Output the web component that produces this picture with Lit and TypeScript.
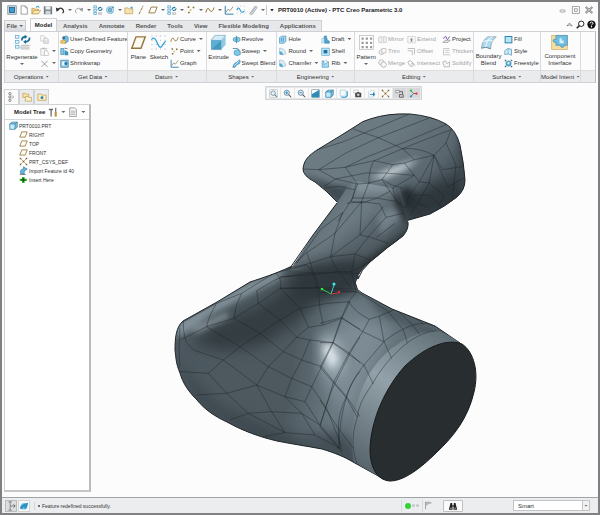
import { LitElement, html, svg, css, nothing, TemplateResult } from "lit";
import { customElement, property } from "lit/decorators.js";

const shapes: Record<string, TemplateResult> = {
  app: svg`<rect x="1" y="1" width="10" height="10" fill="#e6eef3" stroke="#6e7f8a"/><rect x="3" y="3" width="6" height="6" fill="#3d9bd0" stroke="#1f5f88"/>`,
  doc: svg`<path d="M2.500 1h5l2.500 2.500v7.500h-7.500z" fill="#fff" stroke="#777" stroke-width=".8"/><path d="M7.500 1v2.500h2.500" fill="none" stroke="#777" stroke-width=".7"/>`,
  open: svg`<path d="M1 10.500v-6.500h3l1 1h4v5.500z" fill="#f0d08a" stroke="#b48a3a" stroke-width=".7"/><path d="M1 10.500l2.500-4h8l-2.500 4z" fill="#fbe7b5" stroke="#b48a3a" stroke-width=".7"/><path d="M6 3q2-2.500 4 0" fill="none" stroke="#3b92c4" stroke-width="1.300"/>`,
  save: svg`<path d="M1 1.500h9l1 1v8.500h-10z" fill="#777f86"/><rect x="3" y="1.500" width="6" height="4" fill="#eceef0"/><rect x="3" y="7" width="6" height="4" fill="#cfd4d8"/>`,
  undo: svg`<path d="M3 5.500q4-3.500 7 .500q1 2.500-1 4" fill="none" stroke="#333" stroke-width="1.500"/><path d="M1 3l.800 5 4-2.500z" fill="#333"/>`,
  redo: svg`<path d="M9 5.500q-4-3.500-7 .500q-1 2.500 1 4" fill="none" stroke="#999" stroke-width="1"/><path d="M11 3l-.800 5-4-2.500z" fill="#999"/>`,
  regen: svg`<g fill="#e9f5fb" stroke="#4ba0c8" stroke-width=".8"><rect x="1" y="1" width="3" height="2.500"/><rect x="1" y="5" width="3" height="2.500"/><rect x="1" y="9" width="3" height="2.500"/></g><path d="M6 5.500q.500-3 4-2.500M11 4q-.500 3-4 2.500" fill="none" stroke="#1b79a8" stroke-width="1.400"/><path d="M6 9.500h5M6 11h5" stroke="#999" stroke-width=".8"/>`,
  cubes: svg`<circle cx="6" cy="6" r="4" fill="none" stroke="#70b8d8" stroke-width="1.300"/><path d="M4 4.500l2-1 2 1v3l-2 1-2-1z" fill="#77bfdf" stroke="#256d93" stroke-width=".7"/><path d="M9 1l2 2-2 1z" fill="#2b89b5"/>`,
  folder: svg`<path d="M1 10.500v-7h4l1 1.200h4.500v5.800z" fill="#f7e2ae" stroke="#bd9a4c" stroke-width=".8"/><path d="M7 3.500l3-2 .500 3z" fill="#3e9acb"/>`,
  line: svg`<path d="M3.500 11l5-10" stroke="#8b6a2c" stroke-width="1.100" stroke-dasharray="4 1"/>`,
  plane: svg`<path d="M1 9.500l2.800-7h7.200l-2.800 7z" fill="#fffdf7" stroke="#94763c" stroke-width="1.100"/>`,
  curve: svg`<path d="M1 9q2-8 4.500-3t5.500-3" fill="none" stroke="#94763c" stroke-width="1.200"/>`,
  point: svg`<path d="M2 1.500h2v2h-2zM8 2h2v2h-2zM2.500 8h2v2h-2z" fill="#8b6a2c"/><path d="M4.500 5h2v2h-2z" fill="#dcb35c"/>`,
  graph: svg`<path d="M1.500 1v10h10" fill="none" stroke="#2d83b4" stroke-width="1.200"/><path d="M2 9l3-4 2 2 4-5" fill="none" stroke="#8f8464"/>`,
  sketch: svg`<g fill="#b9c2c8"><path d="M1 1h1v1h-1zM5 1h1v1h-1zM9.500 1h1v1h-1zM1 10h1v1h-1zM5 10h1v1h-1zM10 10h1v1h-1zM1 5.500h1v1h-1zM10 5.500h1v1h-1z"/></g><path d="M1 6q2-5 4 0t5 1" fill="none" stroke="#2d9bd0" stroke-width="1.300"/>`,
  clip: svg`<path d="M2 10.500l6-8.500q2-1 3 .800l-5.500 8q-2 1.500-3.500-.300z" fill="#dfe4e8" stroke="#8b969e" stroke-width=".8"/><path d="M4 9.500l5-7" stroke="#8b969e" stroke-width=".7"/>`,
  copy: svg`<path d="M1 1h4l2 2v5h-6z" fill="#fff" stroke="#b5b5b5" stroke-width=".8"/><path d="M5 4h4l2 2v5h-6z" fill="#f0f0f0" stroke="#aaa" stroke-width=".8"/><path d="M6 8h4M6 9.500h4" stroke="#c5c5c5" stroke-width=".6"/>`,
  paste: svg`<path d="M1 2h8v9h-8z" fill="#f4f4f4" stroke="#b5b5b5" stroke-width=".8"/><path d="M3 1h4v2h-4z" fill="#bbb"/><path d="M6 5h3l2 2v4.500h-5z" fill="#fff" stroke="#aaa" stroke-width=".8"/>`,
  cross: svg`<path d="M2 2.500l8 8M10 2.500l-8 8" stroke="#888" stroke-width="1.100"/>`,
  udf: svg`<path d="M4 3l4-2 3 1.500v6l-4 2.500-3-2z" fill="#77bde0" stroke="#3786ae" stroke-width=".7"/><path d="M1 7.500l4-1 2.500 1.500v3h-6.500z" fill="#f2c867" stroke="#b28a36" stroke-width=".7"/><circle cx="5" cy="3.500" r="2" fill="#3e6f9c"/>`,
  copygeo: svg`<path d="M1 2h4v8h-4z" fill="#8bcbe8" stroke="#2c7da6" stroke-width=".8"/><path d="M6 4l5 2.500v4.500h-5z" fill="#3a95c2"/><path d="M6 1.500l4 1" stroke="#555" stroke-width="1"/>`,
  shrink: svg`<rect x="1" y="1.500" width="10" height="9.500" fill="#8dc7e2" stroke="#37789b" stroke-width=".8"/><path d="M3 3.500h3v5h-3z" fill="#f3fafe"/><circle cx="8" cy="6" r="2" fill="#1f76a3"/>`,
  revolve: svg`<path d="M1 6h10" stroke="#888" stroke-width=".7"/><path d="M2 4l3-1v6l-3-1zM7 3l3.500 1v4l-3.500 1z" fill="#9bd4ec" stroke="#338db6" stroke-width=".8"/><path d="M6 1v10" stroke="#2a7ca4"/>`,
  sweep: svg`<path d="M1 2h6q3 1 3 4" fill="none" stroke="#37789b"/><path d="M3 5.500l4-2 4 2v4.500l-4 1.500-4-1.500z" fill="#7fc8e8" stroke="#2c85b0" stroke-width=".8"/>`,
  blend: svg`<path d="M1 11q1-6 6-7l3-3q2 2 0 5l-4 2-2 3z" fill="#6fbbe0" stroke="#2f7fa9" stroke-width=".8"/><path d="M3 9l6-6" stroke="#d9f2fc"/>`,
  hole: svg`<path d="M2 3.500l3-2h5.500v7l-2.500 2.500h-6z" fill="#a9daf0" stroke="#318ab6" stroke-width=".8"/><path d="M4.500 4v5M7 3v6" stroke="#318ab6"/>`,
  round: svg`<path d="M2 1.500q7-.500 8.500 7.500l-4 1.500q0-5-4.500-5.500z" fill="#d8eff9" stroke="#9aa7af" stroke-width=".7"/><path d="M1.500 5.500q5 .500 5 5.500l-4.500-1z" fill="#4fa7d2"/>`,
  draft: svg`<path d="M4 2l3-1 1.500 6 2.500 1v3h-6z" fill="#4ca5cf" stroke="#2c7fa7" stroke-width=".7"/><path d="M1 5l3-1v6l-3 1z" fill="#d9f0fa" stroke="#78b1cc" stroke-width=".7"/>`,
  shell: svg`<rect x="1" y="1.500" width="10" height="9.500" fill="#bfe4f4" stroke="#499bc0" stroke-width=".8"/><rect x="3.500" y="4" width="5" height="4.500" fill="#1f6f9b"/>`,
  rib: svg`<path d="M1.500 2.500h2.500v5l6-4v7.500h-8.500z" fill="#a7dbf1" stroke="#3b91ba" stroke-width=".8"/><path d="M6 1.500l3 2" stroke="#999"/>`,
  mirror: svg`<path d="M5 2v8.500l-4-1v-6.500zM7.500 2v8.500l3.500-1v-6.500z" fill="#f7f7f7" stroke="#b2b2b2" stroke-width=".8"/>`,
  trim: svg`<circle cx="4.500" cy="7" r="3.200" fill="#f4f4f4" stroke="#b2b2b2"/><path d="M5 2h5.500v6h-5.500z" fill="#fafafa" stroke="#aaa" stroke-width=".8"/>`,
  merge: svg`<circle cx="4.500" cy="4.500" r="3.500" fill="#f4f4f4" stroke="#b2b2b2"/><circle cx="7.500" cy="7.500" r="3.500" fill="#fafafa" stroke="#aaa"/>`,
  extend: svg`<path d="M1 2h10v8.500h-10z" fill="#f7f7f7" stroke="#aaa" stroke-width=".8" stroke-dasharray="2 1"/><path d="M4 6h4l-2-2zM5 6h2v3h-2z" fill="#888"/>`,
  offset: svg`<path d="M1 2h9v8M1 5h6v6" fill="none" stroke="#aaa"/>`,
  intersect: svg`<path d="M1 4q3-4 6 0t0 6q-4 1-6-6zM5 7q4-3 6 2" fill="none" stroke="#aaa"/>`,
  project: svg`<path d="M1 10l3-3h7l-3 3z" fill="#e6e2ee" stroke="#777" stroke-width=".7"/><path d="M2 5q3-6 4-1t4-2" fill="none" stroke="#7b53ac" stroke-width="1.300"/>`,
  thicken: svg`<path d="M10 2h-8v8.500h9M4 4.500h6M4 7.500h6" fill="none" stroke="#bbb"/>`,
  solidify: svg`<path d="M1 4l2 6.500h7v-7l-3 3-2-4z" fill="#f7f7f7" stroke="#aaa"/>`,
  fill: svg`<rect x="1.500" y="2" width="9" height="8.500" fill="#b8e4f7" stroke="#2b80ac" stroke-width="1.300"/>`,
  style: svg`<path d="M1 10v-5q4-5 9-2v8q-4-3-9-1z" fill="#d7eef8" stroke="#3d91bb" stroke-width=".9"/><path d="M5.500 2.500v7" stroke="#3d91bb" stroke-width=".7"/>`,
  free: svg`<circle cx="6" cy="6" r="3.500" fill="#5fb2da" stroke="#2f7ca4" stroke-width=".8"/><path d="M1 1h2v2h-2zM9 1h2v2h-2zM1 9h2v2h-2zM9 9h2v2h-2z" fill="#4c6a7c"/><circle cx="6" cy="5.500" r="1.500" fill="#d8f0fa"/>`,
  fit: svg`<rect x="1" y="1" width="10" height="10" fill="#f4f6f7" stroke="#aab3b9" stroke-width=".7"/><circle cx="5.500" cy="5.500" r="3" fill="#e4f3fa" stroke="#68808c"/><path d="M7.500 7.500l3 3" stroke="#68808c" stroke-width="1.400"/>`,
  zoomin: svg`<circle cx="5" cy="5" r="3.500" fill="#ddf0fa" stroke="#5a7888"/><path d="M3.200 5h3.600M5 3.200v3.600" stroke="#2288bd" stroke-width="1.200"/><path d="M7.500 7.500l3.500 3.500" stroke="#555" stroke-width="1.400"/>`,
  zoomout: svg`<circle cx="5" cy="5" r="3.500" fill="#ddf0fa" stroke="#5a7888"/><path d="M3.200 5h3.600" stroke="#2288bd" stroke-width="1.200"/><path d="M7.500 7.500l3.500 3.500" stroke="#555" stroke-width="1.400"/>`,
  repaint: svg`<rect x="1" y="1" width="10" height="10" fill="#fff" stroke="#6f8793" stroke-width=".8"/><path d="M1 11v-4l10-6v10z" fill="#2c8db8"/>`,
  cube: svg`<path d="M1 4l3-2.500h7v6.500l-3 3h-7z" fill="#84cbe9" stroke="#286f94" stroke-width=".9"/><path d="M1 4h7v7M8 4l3-2.500" fill="none" stroke="#286f94" stroke-width=".9"/><path d="M1.700 4.700h5.600v5.600h-5.600z" fill="#c4e9f8"/>`,
  saved: svg`<path d="M1.500 1.500h8v8h-8z" fill="#f2fafd" stroke="#a0b8c4" stroke-width=".8"/><path d="M3 11h6l2-2v-6" fill="none" stroke="#2e9dd0" stroke-width="1.500"/>`,
  camera: svg`<path d="M1 1.500h6v4h-6z" fill="#fff" stroke="#aaa" stroke-width=".7"/><path d="M3 5h2l1-1h2l1 1h2v6h-8z" fill="#444"/><circle cx="7" cy="7.800" r="1.700" fill="#ccc"/>`,
  arrowbox: svg`<path d="M2 4l2-2h6v7l-2 2h-6z" fill="#eef7fb" stroke="#b4c7d0" stroke-width=".7"/><path d="M4 7h4v-3l3 3-3 3v-2h-4z" fill="#2b7cab"/>`,
  csys: svg`<path d="M2 2l8 8M10 2l-8 8" stroke="#b9914c" stroke-width=".9"/><path d="M1 1h2v2h-2zM9 1h2v2h-2zM5 5h2v2h-2zM1 9h2v2h-2zM9 9h2v2h-2z" fill="#7d622d"/>`,
  annot: svg`<path d="M1 2h5v3h-5z" fill="#eee" stroke="#777" stroke-width=".8"/><path d="M6 3.500h4v4h-4v3.500h5v-3.500" fill="none" stroke="#444"/>`,
  spin: svg`<path d="M6 6h4.500" stroke="#d33" stroke-width="1.300"/><path d="M6 6l-3.500-4" stroke="#37a24a" stroke-width="1.300"/><path d="M6 6l-3.500 4" stroke="#2f86c2" stroke-width="1.300"/><circle cx="10" cy="6" r="1.500" fill="#d33"/><circle cx="2.500" cy="2" r="1.300" fill="#37a24a"/><circle cx="2.500" cy="10" r="1.300" fill="#2f86c2"/>`,
  tree: svg`<g fill="#fff" stroke="#555" stroke-width=".8"><circle cx="3.500" cy="2" r="1.400"/><circle cx="3.500" cy="6" r="1.400"/><circle cx="3.500" cy="10" r="1.400"/></g><path d="M6 4l2 2-2 2" fill="none" stroke="#888"/>`,
  folders: svg`<path d="M1 6.500v-5h3l1 1h3v4z" fill="#f7e2ae" stroke="#bd9a4c" stroke-width=".8"/><path d="M4 11v-5.500h3l1 1h3.500v4.500z" fill="#fdf0cc" stroke="#bd9a4c" stroke-width=".8"/>`,
  favs: svg`<path d="M1 10v-7.500h4l1 1.200h5v6.300z" fill="#fbeabd" stroke="#bd9a4c" stroke-width=".8"/><circle cx="6" cy="6.800" r="1.700" fill="#2683ae"/>`,
  tools: svg`<path d="M1 2h5v2h-5zM3 4h1.500v7.500h-1.500z" fill="#666"/><path d="M8.500 1h1.500v5h-1.500z" fill="#777"/><path d="M8 6h2.500v5.500h-2.500z" fill="#c08c3a"/>`,
  list: svg`<path d="M2 1h6l2 2v8.500h-8z" fill="#f7f7f7" stroke="#777" stroke-width=".8"/><path d="M3.500 5h5M3.500 7h5M3.500 9h5" stroke="#999" stroke-width=".8"/>`,
  import: svg`<path d="M2 10q-1-6 4-6v-3l5 3-4 3v4z" fill="#68b5da" stroke="#28749b" stroke-width=".8"/><path d="M1 11.500h8" stroke="#555"/>`,
  plus: svg`<path d="M4 2.500h3.500v2.500h3v3h-3v2.500h-3.500v-2.500h-3v-3h3z" fill="#35b52e"/><path d="M5 4h1.500v5h-1.500zM3 5.700h5.500v1.500h-5.500z" fill="#174c14"/>`,
  treepane: svg`<path d="M5 1v10M3 1h4M3 11h4M5 6h6" fill="none" stroke="#777"/><path d="M9 4l2 2-2 2" fill="none" stroke="#555"/>`,
  web: svg`<circle cx="6" cy="6.500" r="4" fill="#8ccbe8"/><path d="M1 9q1-6 10-7q-1 6-4 8l-1-3-2 3z" fill="#2b92c6"/>`,
  find: svg`<path d="M1 10.500l2-8h2l.500 8zM11 10.500l-2-8h-2l-.500 8z" fill="#222"/><path d="M5 5h2v2h-2z" fill="#222"/><circle cx="3.500" cy="8.800" r="1" fill="#999"/><circle cx="8.500" cy="8.800" r="1" fill="#999"/>`,
  flag: svg`<path d="M2 1v10" stroke="#888"/><path d="M3 1.500q4-1 7 1q-3 0-7 3z" fill="#b8b8b8" stroke="#999" stroke-width=".6"/>`,
  min: svg`<rect x="2.500" y="6" width="6" height="2.500" rx="1" fill="#fff" stroke="#888" stroke-width=".9"/>`,
  max: svg`<rect x="1.500" y="2" width="8.500" height="8" fill="#fff" stroke="#888" stroke-width=".9"/><rect x="4" y="4.500" width="3.500" height="3" fill="none" stroke="#888" stroke-width=".9"/>`,
  close: svg`<path d="M2 2.500l8 7M10 2.500l-8 7" stroke="#777" stroke-width="2.400"/><path d="M2 2.500l8 7M10 2.500l-8 7" stroke="#fff" stroke-width=".7"/>`,
  up: svg`<path d="M2.500 8l3.500-4 3.500 4-3.500-1.500z" fill="#fff" stroke="#555" stroke-width=".8"/>`,
  search: svg`<circle cx="7" cy="5" r="3.600" fill="#fff" stroke="#222" stroke-width="1.300"/><path d="M4.500 7.500l-3.500 3.500" stroke="#222" stroke-width="1.900"/>`,
  help: svg`<circle cx="6" cy="6" r="5.500" fill="#111"/><path d="M4 4.700q.200-1.900 2-1.900t2 1.600q0 1-1.200 1.500-.8.400-.8 1.300" fill="none" stroke="#fff" stroke-width="1.300"/><circle cx="6" cy="9" r=".9" fill="#fff"/>`,
  regenBig: svg`<g fill="#e9f5fb" stroke="#5aaacf"><rect x="2" y="2" width="5" height="4"/><rect x="2" y="9" width="5" height="4"/><rect x="2" y="16" width="5" height="4"/></g><path d="M11 9q0-5 5-5M22 5q0 6-6 6" fill="none" stroke="#1a6d9a" stroke-width="2.400"/><path d="M15 1l4 3-4 3zM17 8v6l-4-3z" fill="#1a6d9a"/><path d="M10 16h12M8 18.500h14M9 21h13" stroke="#999"/>`,
  planeBig: svg`<path d="M2.500 20l6-16h13l-6 16z" fill="#fdfaf3" stroke="#94763c" stroke-width="2"/>`,
  sketchBig: svg`<g fill="#aab6be"><path d="M2 2h1.500v1.500h-1.500zM8 2h1.500v1.500h-1.500zM14 2h1.500v1.500h-1.500zM20.500 2h1.500v1.500h-1.500zM2 8h1.500v1.500h-1.500zM20.500 8h1.500v1.500h-1.500zM2 14h1.500v1.500h-1.500zM20.500 14h1.500v1.500h-1.500zM2 20.500h1.500v1.500h-1.500zM8 20.500h1.500v1.500h-1.500zM14 20.500h1.500v1.500h-1.500zM20.500 20.500h1.500v1.500h-1.500zM14 8h1.500v1.500h-1.500zM8 14h1.500v1.500h-1.500z"/></g><path d="M2 8q4-6 8 4t7 5 5-7" fill="none" stroke="#2f9fd4" stroke-width="1.800"/>`,
  extrudeBig: svg`<path d="M7 2h15l-6 6v14h-14v-14z" fill="#c9ccd0" stroke="#9aa0a6" stroke-width=".8"/><path d="M2 9l5-7h15l-6 7z" fill="#d4eef9" stroke="#8bb6ca" stroke-width=".8"/><path d="M16 9l6-7v13l-6 7z" fill="#8ccae6"/><path d="M2 9h14v13h-14z" fill="#4599c0"/><path d="M2 9h14l-14 13z" fill="#5cafd5"/>`,
  patternBig: svg`<rect x="2" y="2" width="20" height="20" fill="#fff" stroke="#bbb"/><path d="M5 5h3v3h-3zM11 5h3v3h-3zM17 5h3v3h-3zM5 11h3v3h-3zM11 11h3v3h-3zM17 11h3v3h-3zM5 17h3v3h-3zM11 17h3v3h-3zM17 17h3v3h-3z" fill="#999"/>`,
  boundBig: svg`<path d="M2 20q1-11 9-16l12 0q-8 6-8 17q-5-4-13-1z" fill="#a9daf0" stroke="#8a9aa3"/><path d="M8 19q1-10 9-15M5 11q6-3 13-1" fill="none" stroke="#f4fbff" stroke-width="1.500"/><path d="M2 20q6-3 13 1" fill="none" stroke="#6f8d9c" stroke-width="1.300"/>`,
  compBig: svg`<rect x="1" y="2" width="22" height="20" fill="#f5dca0" stroke="#cfae66"/><path d="M7 2h16v14h-5q1 3-2 3t-2-3h-7v-4q-4 0-4-2.500t4-2z" fill="#6fbfe2" stroke="#3e90b6"/><path d="M12 6h3v3h3v4h-6z" fill="#d8f0fa"/>`,
};

@customElement("x-icon")
class XIcon extends LitElement {
  @property() name = "";
  @property({ type: Boolean, reflect: true }) big = false;
  @property({ type: Boolean, reflect: true }) small = false;
  static styles = css`
    :host { display: block; flex: none; width: 10px; height: 10px; }
    :host([small]) { width: 9px; height: 9px; }
    :host([big]) { width: 17px; height: 17px; }
    svg { display: block; width: 100%; height: 100%; }
  `;
  render() {
    return html`<svg viewBox=${this.big ? "0 0 24 24" : "0 0 12 12"} aria-hidden="true">${shapes[this.name] ?? nothing}</svg>`;
  }
}

/* The blend-surface part, drawn on the canvas in window coordinates. */
@customElement("model-view")
class ModelView extends LitElement {
  static styles = css`
    :host { display: flex; flex: 1; min-height: 0; }
    svg { display: block; width: 100%; height: 100%; }
    .mesh { fill: none; stroke: #1d2327; stroke-width: 2; stroke-opacity: .65; stroke-linejoin: round; }
    .edge { fill: none; stroke: #20272b; stroke-width: 1; }
  `;
  render() {
    const body = "M290 267C275 274 262 278 250 282L217 302L183 321C176 327 175 338 175 350C176 358 176 364 180 373C183 384 189 392 197 400C205 410 216 417 227 422C243 431 260 437 277 441C292 444 306 446 322 449C335 453 345 457 353 462L380 477L440 400L460 343L435 326L392 309L362 293Q356 290 356 285Q354 281 359 277L330 262Z";
    const neck = "M290 270L313 235L337 203L352 180L400 190L408 222Q409 229 403 236Q396 242 387 248Q377 257 370 262Q361 270 358 276L356 279L310 272Z";
    const head = "M303 169C304 160 308 156 317 150L340 136L356 126Q362 121 370 119Q388 113 410 114Q432 116 446 124Q456 130 460 145Q464 164 465 180Q465 190 457 197Q446 206 430 214L409 220L385 228L337 202Q326 190 315 182Q303 176 303 169Z";
    return html`
      <svg viewBox="91 100 505 397" preserveAspectRatio="xMidYMid meet" role="img" aria-label="Part PRT0010">
        <defs>
          <linearGradient id="hg" x1="0" y1="0" x2="1" y2=".6"><stop offset="0" stop-color="#6f7d85"/><stop offset=".5" stop-color="#6a7880"/><stop offset=".8" stop-color="#59666e"/><stop offset="1" stop-color="#343e44"/></linearGradient>
          <linearGradient id="bg" x1="0" y1="0" x2="1" y2=".1"><stop offset="0" stop-color="#4d5960"/><stop offset=".45" stop-color="#4d595f"/><stop offset=".62" stop-color="#6b7a82"/><stop offset="1" stop-color="#5b6870"/></linearGradient>
          <linearGradient id="ng" x1="0" y1="0" x2="1" y2="1"><stop offset="0" stop-color="#56636a"/><stop offset=".45" stop-color="#66737b"/><stop offset="1" stop-color="#333c41"/></linearGradient>
          <linearGradient id="rg" gradientUnits="userSpaceOnUse" x1="450" y1="335" x2="360" y2="470"><stop offset="0" stop-color="#5f6d75"/><stop offset=".45" stop-color="#93a2aa"/><stop offset="1" stop-color="#566269"/></linearGradient>
          <filter id="b3" x="-50%" y="-50%" width="200%" height="200%" color-interpolation-filters="sRGB"><feGaussianBlur stdDeviation="3"/></filter>
          <filter id="b7" x="-50%" y="-50%" width="200%" height="200%" color-interpolation-filters="sRGB"><feGaussianBlur stdDeviation="7"/></filter>
          <clipPath id="bc"><path d=${body}/></clipPath>
          <clipPath id="nc"><path d=${neck}/></clipPath>
          <clipPath id="hc"><path d=${head}/></clipPath>
          <clipPath id="all"><path d=${head}/><path d=${neck}/><path d=${body}/></clipPath>
        </defs>

        <path d=${head} fill="url(#hg)"/>
        <g clip-path="url(#hc)">
          <path d="M303 174L330 184L352 188L340 206Z" fill="#3f4a50" filter="url(#b3)"/>
          <path d="M400 200L435 182L468 178L462 205L408 228Z" fill="#2e373c" filter="url(#b7)"/>
          <path d="M458 120L470 150L470 200L460 190Z" fill="#3c474d" filter="url(#b3)"/>
          <path d="M370 178L392 168L420 158L404 170L385 178Z" fill="#d0dbe1" filter="url(#b3)"/>
          <path d="M398 192L408 212L420 200L408 186Z" fill="#262e32" filter="url(#b3)"/>
        </g>
        <path class="edge" d=${head}/>

        <path d=${body} fill="url(#bg)"/>
        <g clip-path="url(#bc)">
          <path d="M190 345L214 324L258 306L290 284L340 268L350 284L322 298L296 322L262 346L225 352Z" fill="#343d42" filter="url(#b7)"/>
          <path d="M172 338L180 321L250 282L286 268L278 280L250 294L212 314L188 332Z" fill="#83929a" filter="url(#b3)"/>
          <path d="M172 355L200 407L270 446L340 462L340 452L270 430L213 402L186 370Z" fill="#39444a" filter="url(#b7)"/>
          <path d="M362 292L460 340L440 342L382 316Z" fill="#4e5a61" filter="url(#b3)"/>
          <path d="M322 335L362 316L392 330L370 375L350 415L322 385Z" fill="#7c8b94" filter="url(#b7)"/>
          <path d="M322 334L340 346L342 376L324 368Z" fill="#b4c1c8" filter="url(#b7)"/>
          <path d="M323 347L331 345L338 360L331 368Z" fill="#dbe4e9" filter="url(#b3)"/>
          <path d="M194 331L228 315" stroke="#c3d0d7" stroke-width="3" filter="url(#b3)"/>
          <path d="M300 436L340 430L358 446L368 480L340 466Z" fill="#414c53" filter="url(#b7)"/>
        </g>
        <path class="edge" d=${body}/>

        <path d=${neck} fill="url(#ng)"/>
        <g clip-path="url(#nc)">
          <path d="M345 190L385 194L370 215L320 250L308 258Z" fill="#6c7a82" filter="url(#b7)"/>
          <path d="M378 212L398 206L404 215L380 236Z" fill="#728089" filter="url(#b3)"/>
          <path d="M410 228L362 262L350 290L366 290L420 240Z" fill="#2d363a" filter="url(#b3)"/>
          <path d="M398 188L410 214L408 228L394 204Z" fill="#2a3237" filter="url(#b3)"/>
          <path d="M352 180L385 176L392 192L356 194Z" fill="#82919a" filter="url(#b3)"/>
        </g>
        <path class="edge" d="M290 268L313 235L337 203M408 222Q409 229 403 236L387 248L370 262Q361 270 358 279"/>
        <g clip-path="url(#all)">
          <path d="M292 274L318 264L364 258L360 292L322 298L292 296Z" fill="#2e373b" filter="url(#b7)"/>
          <path d="M300 272L350 266L356 284L318 292Z" fill="#30393e" filter="url(#b7)"/>
        </g>

        <path d="M460 343C452 337 444 332 436 331C408 332 380 352 366 380C354 402 349 432 354 462L380 477L420 420Z" fill="url(#rg)"/>
        <path d="M462 344C474 352 479 372 474 392C468 418 454 436 437 452C421 468 404 481 390 481C376 480 370 466 370 449C371 420 385 388 405 366C425 347 447 338 462 344Z" fill="#282d2f" stroke="#15191b"/>

        <g clip-path="url(#all)">
        <g class="mesh" transform="translate(296 108) scale(.33333)">
          <path d="M65 125L140 102L205 75L340 18M68 185L150 135L245 90L400 30M148 178L210 148L320 105L450 50M235 158L320 122L400 90L465 65M170 62L205 75L245 88L320 122L355 155"/>
          <path d="M22 183L68 185L148 178Q200 165 235 158M320 122Q370 118 414 142L450 105L465 65M235 158L290 170L325 165L355 155L414 142L440 185L504 175"/>
          <path d="M68 185L118 213L185 228L225 225M85 235L118 213L210 195L265 195L355 202M148 178L185 228M235 158Q220 175 218 225M290 170L258 215M325 165L355 202L370 222L400 225L414 142L455 238L504 210"/>
          <path d="M85 240L130 235L175 245M180 228L170 270L125 340M218 225L260 215L285 230L320 240M258 215L282 250L310 290M355 202L290 240L300 280M370 222L335 270L330 300M400 225L365 285L345 320M355 260L400 262L440 300M450 105L480 170L470 270M400 225L445 265L430 290M365 285L400 300M414 142L370 222"/>
          <path d="M185 228L165 280M218 225L195 285M170 270L240 270L300 280L330 300M165 280L195 285L240 272M282 250L240 272"/>
        </g>
        <g class="mesh" transform="translate(280 180) scale(.33333)">
          <path d="M245 65L165 160L80 218L30 262M245 65L240 165L265 170L325 190M310 80L240 165L152 230M318 112L370 100M318 112L300 72L245 65L200 70M318 112L265 170L225 222L152 230L90 250L40 262M188 98L165 160L152 230L165 260L215 325M290 172L345 130M225 222L215 275L228 335M80 218L92 250L110 325M188 98L120 150L50 250M215 275L272 242M225 222L272 240"/>
          <path d="M0 290L90 285L170 275L215 275M0 325L110 325L228 335"/>
        </g>
        <g class="mesh" transform="translate(160 250) scale(.33333)">
          <path d="M50 240Q62 215 70 215L170 160L245 130L345 68L440 45M60 270L85 258L140 230L222 205L295 160L362 115L475 112L590 118M290 122L345 90L365 82L450 68L600 70M245 130Q225 165 222 205M290 122L295 160M345 68Q368 85 362 115M170 160Q145 200 140 230M70 215Q68 240 78 275Q85 285 100 300M60 235Q55 300 60 350"/>
          <path d="M140 230L240 290L325 350L395 385L455 410M222 205L300 250L370 305L425 330L485 350M295 160L360 210L410 262L450 270L520 278M362 115L420 175L445 232L490 225L545 205L600 238M475 112L480 180L490 225M440 45Q475 80 475 112M100 300L190 330L290 405L375 440L435 455"/>
          <path d="M60 365L145 370L190 330L240 290L300 250L360 210L420 175L500 160L570 155M145 370L200 430L265 490L375 548M110 435L200 430L290 405L325 350L370 305L410 262L445 232M290 405L335 485L375 548M210 510L265 490L335 485L425 490L480 525L515 420L570 310L600 260M310 560L375 548L465 555L540 595M375 440L425 490L465 555M435 455L455 410L485 350L520 278L545 205L570 155M435 455L480 525L540 595M375 440L395 385L425 330L450 270M455 410L500 475L545 590M485 350L525 400L560 440L600 500M520 278L570 310L600 338M535 595Q540 500 560 440Q575 390 600 365"/>
        </g>
        <g class="mesh" transform="translate(320 280) scale(.33333)">
          <path d="M110 35L85 65L65 112L38 188L0 262M110 35L160 65L205 95L250 150L262 188M85 65Q110 100 148 118L178 108L225 88M178 108L192 185L215 235M65 112L128 155L192 185M0 130L65 112M0 188L38 188L85 222L132 255L160 312M0 262L40 308L78 352L112 412M0 360L55 445L100 505"/>
          <path d="M148 118L128 155L85 222L40 308L15 390L0 440M192 185L132 255Q95 300 78 352Q55 400 55 445Q55 490 65 515M192 185Q240 145 290 132Q320 126 345 138M350 153Q300 155 250 198Q190 250 155 315Q115 370 112 412Q95 460 100 505Q103 530 112 555M225 88Q270 120 298 162M250 100Q290 115 310 132M110 35L0 38M0 440L60 510"/>
        </g>
        </g>

        <path d="M331 294L322 289" stroke="#32c83c"/>
        <path d="M331 294L334 285" stroke="#36c6cf"/>
        <path d="M331 294L338 293" stroke="#d83232"/>
        <circle cx="322" cy="289" r="1.300" fill="#2fe63a"/><circle cx="334" cy="284" r="1.500" fill="#3fe9f0"/><circle cx="339" cy="292" r="1.200" fill="#e03030"/>
      </svg>`;
  }
}

type Item = { icon: string; text?: string; menu?: boolean; off?: boolean };
type Big = { icon: string; lines: string[]; menu?: boolean; w: number };
type Group = { name: string; menu: boolean; w: number; parts: (Big | { w: number; items: Item[] })[] };

const i = (icon: string, text?: string, menu = false, off = false): Item => ({ icon, text, menu, off });

const groups: Group[] = [
  { name: "Operations", menu: true, w: 54, parts: [
    { icon: "regenBig", lines: ["Regenerate"], menu: true, w: 34 },
    { w: 19, items: [i("copy"), i("paste", "", true), i("cross", "", true)] }] },
  { name: "Get Data", menu: true, w: 69, parts: [
    { w: 68, items: [i("udf", "User-Defined Feature"), i("copygeo", "Copy Geometry"), i("shrink", "Shrinkwrap")] }] },
  { name: "Datum", menu: true, w: 79, parts: [
    { icon: "planeBig", lines: ["Plane"], w: 21 }, { icon: "sketchBig", lines: ["Sketch"], w: 20 },
    { w: 36, items: [i("curve", "Curve", true), i("point", "Point", true), i("graph", "Graph")] }] },
  { name: "Shapes", menu: true, w: 71, parts: [
    { icon: "extrudeBig", lines: ["Extrude"], w: 24 },
    { w: 45, items: [i("revolve", "Revolve"), i("sweep", "Sweep", true), i("blend", "Swept Blend")] }] },
  { name: "Engineering", menu: true, w: 78, parts: [
    { w: 43, items: [i("hole", "Hole"), i("round", "Round", true), i("round", "Chamfer", true)] },
    { w: 33, items: [i("draft", "Draft", true), i("shell", "Shell"), i("rib", "Rib", true)] }] },
  { name: "Editing", menu: true, w: 120, parts: [
    { icon: "patternBig", lines: ["Pattern"], menu: true, w: 22 },
    { w: 29, items: [i("mirror", "Mirror", false, true), i("trim", "Trim", false, true), i("merge", "Merge", false, true)] },
    { w: 35, items: [i("extend", "Extend", false, true), i("offset", "Offset", false, true), i("intersect", "Intersect", false, true)] },
    { w: 33, items: [i("project", "Project"), i("thicken", "Thicken", false, true), i("solidify", "Solidify", false, true)] }] },
  { name: "Surfaces", menu: true, w: 67, parts: [
    { icon: "boundBig", lines: ["Boundary", "Blend"], w: 29 },
    { w: 37, items: [i("fill", "Fill"), i("style", "Style"), i("free", "Freestyle")] }] },
  { name: "Model Intent", menu: true, w: 40, parts: [
    { icon: "compBig", lines: ["Component", "Interface"], w: 38 }] },
  { name: "", menu: false, w: 14, parts: [] },
];

const quick: [string, boolean][] = [
  ["app", false], ["doc", false], ["open", false], ["save", false], ["undo", true], ["redo", true], ["regen", false],
  ["cubes", true], ["folder", false], ["line", false], ["plane", true], ["regen", true], ["point", true], ["curve", true],
  ["graph", false], ["sketch", false], ["clip", true],
];
const viewTools: [string, boolean][] = [
  ["fit", false], ["zoomin", false], ["zoomout", false], ["repaint", false], ["cube", false], ["saved", false],
  ["camera", false], ["arrowbox", false], ["csys", false], ["annot", true], ["spin", true],
];
const treeItems: [string, string][] = [
  ["plane", "RIGHT"], ["plane", "TOP"], ["plane", "FRONT"], ["csys", "PRT_CSYS_DEF"], ["import", "Import Feature id 40"], ["plus", "Insert Here"],
];

@customElement("app-root")
class AppRoot extends LitElement {
  static styles = css`
    :host { display: block; font: 6px/8px "Liberation Sans", Arial, sans-serif; color: #333; }
    * { box-sizing: border-box; }
    button { font: inherit; color: inherit; background: none; border: 0; padding: 0; margin: 0; display: flex; align-items: center; white-space: nowrap; }
    .window { height: 100vh; min-height: 320px; display: flex; flex-direction: column; border: 2px solid #808083; background: #fcfcfd; padding: 0 2px; }
    .tri { flex: none; width: 4px; height: 2px; background: #666; clip-path: polygon(0 0, 100% 0, 50% 100%); }
    .title { flex: none; height: 16px; display: flex; align-items: center; padding: 0 2px; }
    .q { width: 12px; height: 12px; justify-content: center; }
    .q.menu { width: 19px; justify-content: flex-start; gap: 3px; padding-left: 1px; }
    .sep { width: 1px; height: 10px; background: #ccc; margin-right: 3px; }
    .doc { margin: 0; font: bold 6px/8px "Liberation Sans", Arial, sans-serif; color: #222; flex: 1; display: flex; align-items: center; gap: 4px; white-space: nowrap; }
    .doc .tri { height: 3px; background: #222; }
    .controls { display: flex; gap: 3px; }
    .tabrow { flex: none; height: 13px; display: flex; align-items: flex-end; font-weight: bold; color: #555; }
    .file { width: 22px; height: 11px; justify-content: center; gap: 2px; font-weight: bold; background: linear-gradient(#f1f1f2, #d8dadd); border: 1px solid #c9cbce; border-bottom: 0; margin-right: 4px; }
    .tabs { display: flex; align-items: flex-end; }
    .tab { height: 11px; font-weight: bold; background: #e7e8ea; border-top: 1px solid #cfd1d4; padding: 0 5px 0 6px; }
    .tab:last-child { border-right: 1px solid #cfd1d4; }
    .tab.on { height: 13px; padding: 0; width: 27px; justify-content: center; color: #222; background: #fcfcfd; border: 1px solid #cfd1d4; border-bottom: 0; }
    .aside { margin-left: auto; display: flex; gap: 2px; padding: 0 0 2px; }
    .ribbon { flex: none; display: flex; border: 1px solid #cfd1d4; border-right-color: #bbb; }
    .group { min-width: 0; flex: var(--w) 1 0; display: flex; flex-direction: column; border-left: 1px solid #d9dadd; }
    .group:first-child { border-left: 0; }
    .body { height: 38px; display: flex; justify-content: flex-start; }
    .name { height: 12px; display: flex; align-items: center; justify-content: center; gap: 2px; background: #eaebed; border-top: 1px solid #dcdee0; white-space: nowrap; }
    .big { width: var(--w); flex: none; flex-direction: column; padding-top: 2px; line-height: 7px; }
    .big .cap { padding-top: 3px; display: flex; flex-direction: column; align-items: center; }
    .big.two .cap { padding-top: 2px; }
    .big .tri { margin-top: 2px; }
    .col { width: var(--w); flex: none; padding-left: 1px; display: grid; grid-template-rows: repeat(3, 12px); align-content: center; }
    .cmd { gap: 1px; }
    .cmd .tri { margin-left: 2px; }
    .cmd.off { color: #a3a3a3; }
    .main { flex: 1; min-height: 0; display: flex; }
    .side { flex: none; width: 87px; display: flex; flex-direction: column; padding: 6px 0 5px; }
    .sidetabs { display: flex; flex: none; }
    .sidetab { width: 15px; height: 15px; justify-content: center; background: #ebecee; border: 1px solid #d0d2d4; border-bottom: 0; }
    .sidetab.on { background: #fcfcfd; }
    .panel { flex: 1; min-height: 0; border: 1px solid #d0d2d4; border-right: 2px solid #b9babc; border-bottom: 2px solid #c5c6c8; background: #fff; }
    .phead { height: 15px; display: flex; align-items: center; padding-left: 9px; border-bottom: 1px solid #d4d6d8; gap: 3px; }
    .phead h2 { margin: 0; font: bold 6px/8px "Liberation Sans", Arial, sans-serif; color: #222; white-space: nowrap; }
    .tree, .tree ul { list-style: none; margin: 0; padding: 0; }
    .tree { padding: 1px 0 0 4px; font-size: 5px; }
    .tree ul { padding-left: 10px; }
    .node { display: flex; align-items: center; gap: 1px; height: 9px; white-space: nowrap; }
    .canvas { flex: 1; min-width: 0; display: flex; flex-direction: column; align-items: stretch; }
    .viewbar { align-self: center; display: flex; flex: none; border: 1px solid #d3d5d7; background: #e6e7e9; padding: 1px; margin: 3px 0 0; gap: 1px; height: 14px; }
    .v { width: 13px; height: 10px; justify-content: center; background: #fafafb; }
    .v.on { background: #d6d8da; }
    .status { flex: none; height: 16px; margin: 0 -2px; padding: 0 8px 0 3px; border-top: 1px solid #a2a3a5; background: #ecedef; display: flex; align-items: center; font-size: 5px; }
    .s { width: 12px; height: 12px; justify-content: center; border: 1px solid #d4d5d7; background: #f7f7f8; margin-right: 1px; }
    .s.on { background: #dcdddf; border-color: #bbb; }
    .msg { margin: 0 0 0 3px; padding-left: 3px; border-left: 1px solid #d5d6d8; flex: 1; display: flex; align-items: center; gap: 2px; }
    .dot { width: 2px; height: 2px; border-radius: 50%; background: #1b4c7c; }
    .lights { display: flex; align-items: center; gap: 1px; height: 12px; padding: 0 3px; border-left: 1px solid #d9dadc; border-right: 1px solid #d9dadc; }
    .led { width: 6px; height: 6px; border-radius: 50%; background: #33d238; }
    .led.dim { width: 3px; height: 3px; background: #c4c6c8; }
    .flag { margin-left: 1px; }
    .find { width: 20px; height: 12px; justify-content: center; background: #fafafb; border: 1px solid #bfc0c2; border-radius: 1px; margin: 0 50px 0 10px; }
    .pick { position: relative; width: 77px; display: flex; }
    .pick select { appearance: none; width: 100%; height: 11px; margin: 0; font: 6px/8px "Liberation Sans", Arial, sans-serif; color: #333; background: #fff; border: 1px solid #c3c4c6; border-radius: 0; padding: 0 4px; }
    .pick .drop { position: absolute; right: 0; top: 0; width: 8px; height: 100%; border: 1px solid #c3c4c6; background: #f1f1f2; display: grid; place-items: center; pointer-events: none; }
  `;

  tri() { return html`<span class="tri"></span>`; }

  part(p: Big | { w: number; items: Item[] }) {
    if ("lines" in p) {
      return html`<button class="big ${p.lines.length > 1 ? "two" : ""}" style="--w:${p.w}px">
        <x-icon big name=${p.icon}></x-icon>
        <span class="cap">${p.lines.map((l) => html`<span>${l}</span>`)}</span>
        ${p.menu ? this.tri() : nothing}
      </button>`;
    }
    return html`<div class="col" style="--w:${p.w}px">${p.items.map((c) => html`
      <button class="cmd ${c.off ? "off" : ""}" aria-label=${c.text || c.icon}>
        <x-icon small name=${c.icon}></x-icon>${c.text ? html`<span>${c.text}</span>` : nothing}${c.menu ? this.tri() : nothing}
      </button>`)}</div>`;
  }

  render() {
    return html`
      <div class="window">
        <header class="title">
          ${quick.map(([n, m]) => html`<button class="q ${m ? "menu" : ""}" aria-label=${n}><x-icon name=${n}></x-icon>${m ? this.tri() : nothing}</button>`)}
          <span class="sep"></span>
          <h1 class="doc">${this.tri()}<span>PRT0010 (Active) - PTC Creo Parametric 3.0</span></h1>
          <div class="controls">
            ${["min", "max", "close"].map((n) => html`<button aria-label=${n}><x-icon name=${n}></x-icon></button>`)}
          </div>
        </header>
        <nav class="tabrow">
          <button class="file">File${this.tri()}</button>
          <div class="tabs">
            <button class="tab on">Model</button>
            ${["Analysis", "Annotate", "Render", "Tools", "View", "Flexible Modeling", "Applications"].map((t) => html`<button class="tab">${t}</button>`)}
          </div>
          <div class="aside">
            ${["up", "search", "help"].map((n) => html`<button aria-label=${n}><x-icon small name=${n}></x-icon></button>`)}
          </div>
        </nav>
        <section class="ribbon">
          ${groups.map((g) => html`
            <div class="group" style="--w:${g.w}">
              <div class="body">${g.parts.map((p) => this.part(p))}</div>
              <div class="name">${g.name}${g.menu ? this.tri() : nothing}</div>
            </div>`)}
        </section>
        <main class="main">
          <aside class="side">
            <div class="sidetabs">
              ${["tree", "folders", "favs"].map((n, k) => html`<button class="sidetab ${k ? "" : "on"}" aria-label=${n}><x-icon name=${n}></x-icon></button>`)}
            </div>
            <div class="panel">
              <div class="phead"><h2>Model Tree</h2><x-icon name="tools"></x-icon>${this.tri()}<x-icon name="list"></x-icon>${this.tri()}</div>
              <ul class="tree">
                <li>
                  <div class="node"><x-icon small name="cube"></x-icon>PRT0010.PRT</div>
                  <ul>${treeItems.map(([ic, t]) => html`<li class="node"><x-icon small name=${ic}></x-icon>${t}</li>`)}</ul>
                </li>
              </ul>
            </div>
          </aside>
          <section class="canvas">
            <div class="viewbar">
              ${viewTools.map(([n, on]) => html`<button class="v ${on ? "on" : ""}" aria-label=${n}><x-icon small name=${n}></x-icon></button>`)}
            </div>
            <model-view></model-view>
          </section>
        </main>
        <footer class="status">
          <button class="s on" aria-label="Tree pane"><x-icon name="treepane"></x-icon></button>
          <button class="s" aria-label="Browser"><x-icon name="web"></x-icon></button>
          <p class="msg"><span class="dot"></span>Feature redefined successfully.</p>
          <div class="lights"><span class="led"></span><span class="led dim"></span><span class="led dim"></span></div>
          <x-icon class="flag" small name="flag"></x-icon>
          <button class="find" aria-label="Find"><x-icon name="find"></x-icon></button>
          <label class="pick"><select aria-label="Selection filter"><option>Smart</option></select><span class="drop">${this.tri()}</span></label>
        </footer>
      </div>`;
  }
}
